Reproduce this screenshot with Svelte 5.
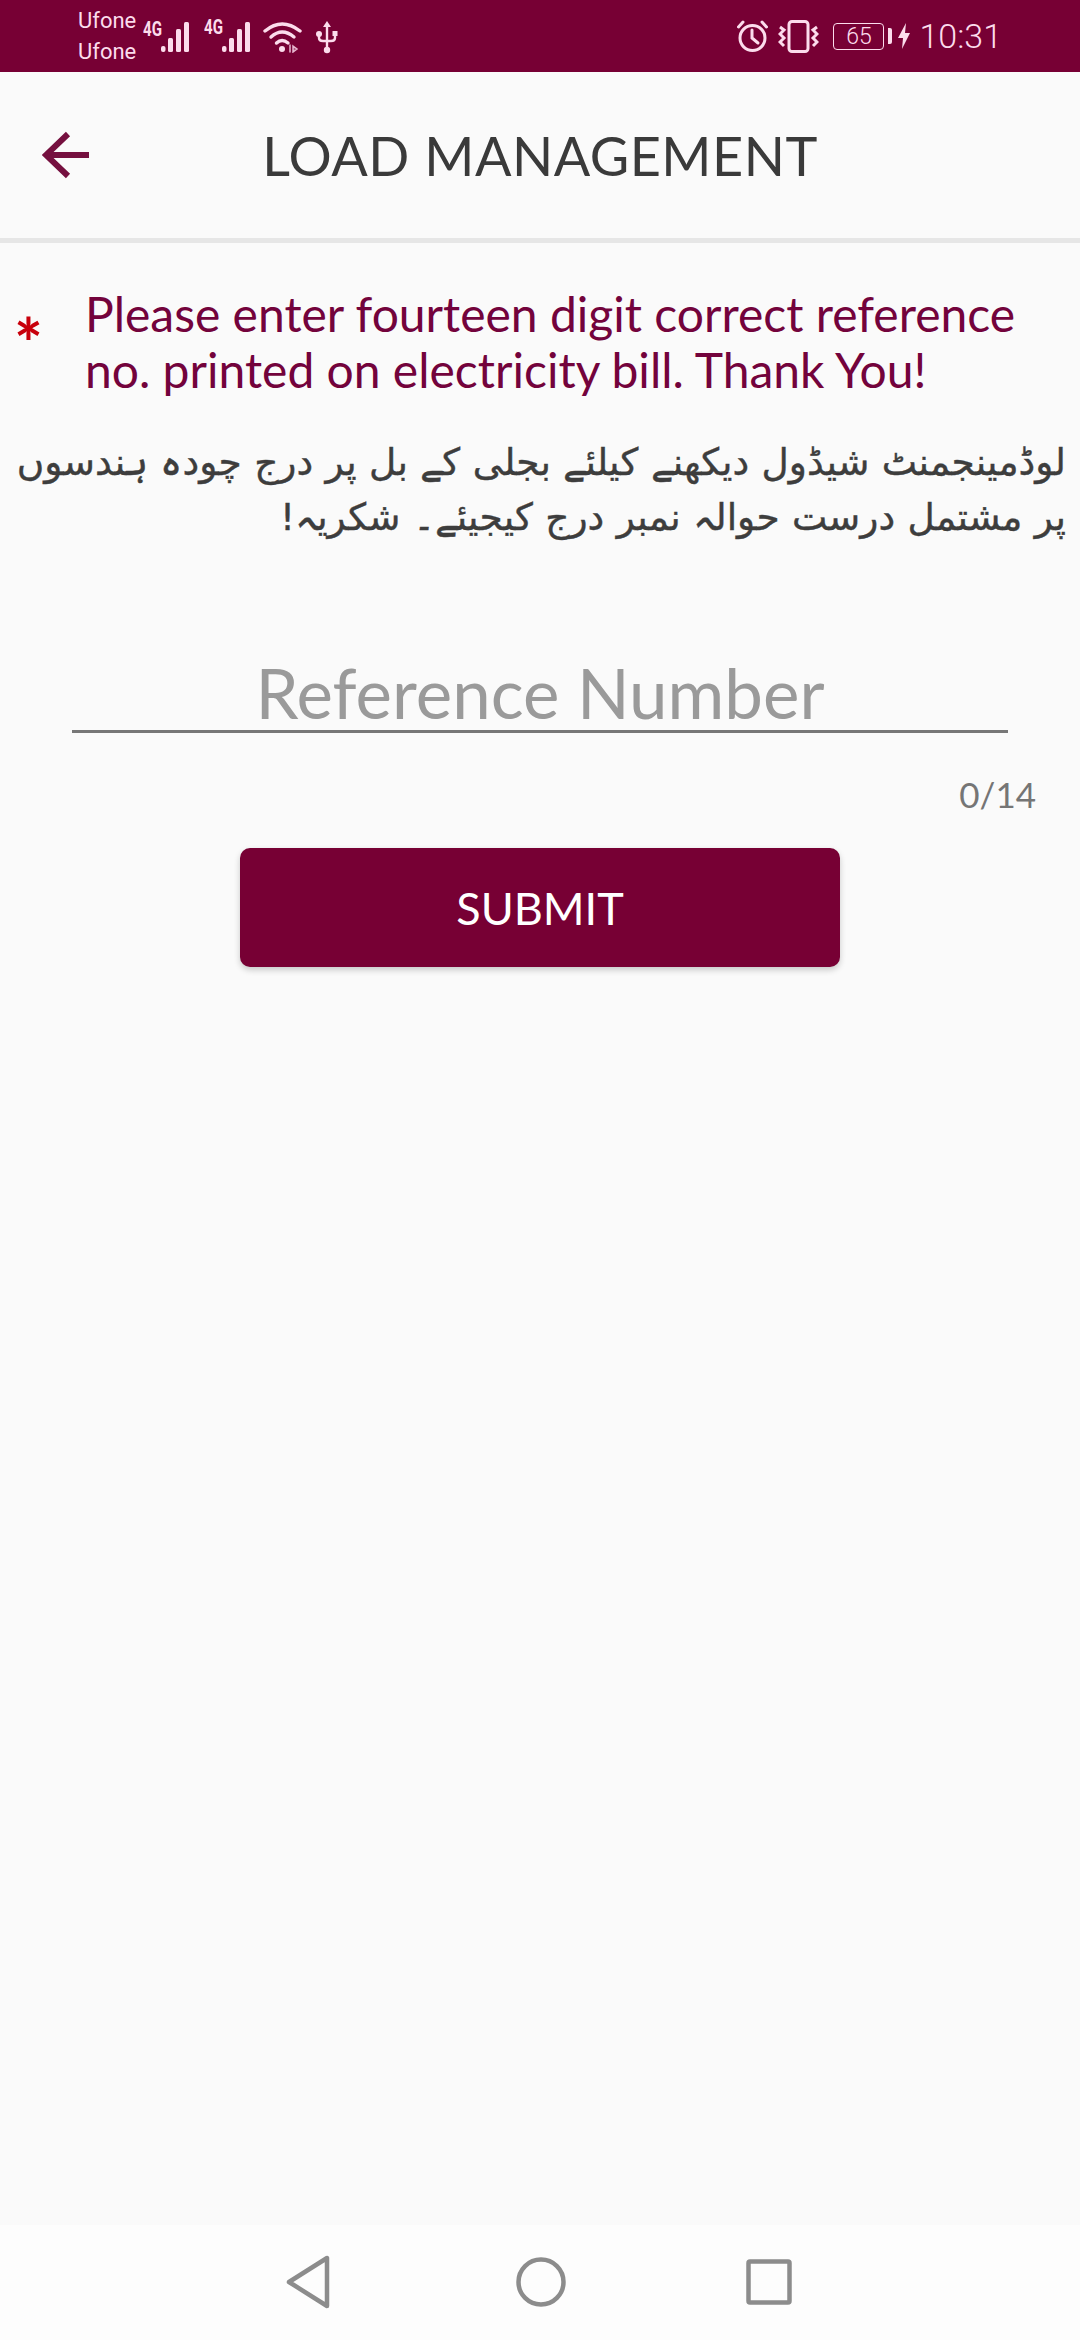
<script lang="ts">
	let reference = $state('');
	const maxDigits = 14;
</script>

<div class="phone">
	<header class="status-bar">
		<div class="status-left">
			<div class="carriers">
				<span>Ufone</span>
				<span>Ufone</span>
			</div>
			<div class="sig">
				<span class="net">4G</span>
				<svg width="32" height="32" viewBox="18 0 32 32">
					<rect x="18" y="26" width="4.500" height="6" rx="2" />
					<rect x="25" y="18" width="5" height="14" rx="1.500" />
					<rect x="33" y="9" width="5" height="23" rx="1.500" />
					<rect x="41" y="2" width="5" height="30" rx="1.500" />
				</svg>
			</div>
			<div class="sig second">
				<span class="net">4G</span>
				<svg width="32" height="32" viewBox="18 0 32 32">
					<rect x="18" y="26" width="4.500" height="6" rx="2" />
					<rect x="25" y="18" width="5" height="14" rx="1.500" />
					<rect x="33" y="9" width="5" height="23" rx="1.500" />
					<rect x="41" y="2" width="5" height="30" rx="1.500" />
				</svg>
			</div>
			<svg class="wifi" width="40" height="32" viewBox="0 0 40 32" fill="none" stroke="#fcdcec" stroke-width="3.400" stroke-linecap="round">
				<path d="M2 10 Q19 -4 37 10" />
				<path d="M8 16 Q19 6 31 16" />
				<path d="M13.500 22 Q19 17 25 22" />
				<circle cx="19" cy="28" r="3" fill="#fcdcec" stroke="none" />
				<path d="M27 24 L27 31 M30 25 L34 28 L30 31 Z" fill="#a8547c" stroke="#e8b8d0" stroke-width="1.500" />
			</svg>
			<svg class="usb" width="22" height="33" viewBox="0 0 22 33" fill="none" stroke="#fcdcec" stroke-width="2.400">
				<path d="M11 5 V28" />
				<path d="M11 0 L15 6 H7 Z" fill="#fcdcec" stroke="none" />
				<circle cx="11" cy="29" r="3.200" fill="#fcdcec" stroke="none" />
				<path d="M3 14 V17 Q3 20 7 20 H15 Q19 20 19 17 V13" />
				<circle cx="3" cy="13" r="3" fill="#fcdcec" stroke="none" />
				<rect x="16.500" y="10" width="5" height="5" fill="#fcdcec" stroke="none" />
			</svg>
		</div>
		<div class="status-right">
			<svg width="31" height="32" viewBox="0 0 31 32" fill="none" stroke="#fcdcec" stroke-width="3" stroke-linecap="round">
				<circle cx="15.500" cy="18" r="12.500" />
				<path d="M15 10 V18 L21 23" />
				<path d="M1.500 7 L6 2" />
				<path d="M29.500 7 L25 2" />
			</svg>
			<svg class="vibrate" width="41" height="33" viewBox="0 0 41 33" fill="none" stroke="#fcdcec" stroke-width="3">
				<rect x="11" y="1.500" width="19" height="30" rx="3" />
				<path d="M2 7 L6 10 L2 14 L6 18 L2 22 L6 26" />
				<path d="M39 7 L35 10 L39 14 L35 18 L39 22 L35 26" />
			</svg>
			<div class="battery">
				<span class="level">65</span>
				<i class="nub"></i>
			</div>
			<svg class="bolt" width="12" height="26" viewBox="0 0 12 26">
				<path d="M8 0 L0 15 H5 L4 26 L12 10 H7 Z" fill="#fcdcec" />
			</svg>
			<span class="time">10:31</span>
		</div>
	</header>

	<nav class="toolbar">
		<button type="button" class="back" aria-label="Back">
			<svg width="48" height="48" viewBox="0 0 48 48" fill="none" stroke="#75103f" stroke-width="6">
				<path d="M47 24 H4" />
				<path d="M26 3 L4 24 L26 45" />
			</svg>
		</button>
		<h1>LOAD MANAGEMENT</h1>
	</nav>

	<main class="content">
		<div class="notice">
			<span class="star">*</span>
			<p>Please enter fourteen digit correct reference no. printed on electricity bill. Thank You!</p>
		</div>
		<p class="urdu" dir="rtl" lang="ur">لوڈمینجمنٹ شیڈول دیکھنے کیلئے بجلی کے بل پر درج چودہ ہندسوں پر مشتمل درست حوالہ نمبر درج کیجیئے۔ شکریہ!</p>

		<div class="field">
			<input type="text" placeholder="Reference Number" maxlength={maxDigits} bind:value={reference} />
		</div>
		<div class="counter">{reference.length}/{maxDigits}</div>
		<button type="button" class="submit">SUBMIT</button>
	</main>

	<footer class="nav-bar">
		<svg width="46" height="54" viewBox="0 0 46 54" fill="none" stroke="#8c8c8c" stroke-width="4.500" stroke-linejoin="round">
			<path d="M41 3 V51 L3 27 Z" />
		</svg>
		<svg width="50" height="52" viewBox="0 0 50 52" fill="none" stroke="#8c8c8c" stroke-width="4.500">
			<circle cx="25" cy="26" r="22.500" />
		</svg>
		<svg class="recents" width="46" height="46" viewBox="0 0 46 46" fill="none" stroke="#8c8c8c" stroke-width="4.500" stroke-linejoin="round">
			<rect x="2.500" y="2.500" width="41" height="41" rx="1.500" />
		</svg>
	</footer>
</div>

<style>
	:global(body) {
		margin: 0;
		background: #fafafa;
	}

	.phone {
		width: 1080px;
		height: 2340px;
		display: flex;
		flex-direction: column;
		background: #fafafa;
		font-family: "Lato", "Open Sans", sans-serif;
		overflow: hidden;
	}

	.status-bar {
		height: 72px;
		flex: none;
		display: flex;
		justify-content: space-between;
		align-items: center;
		padding: 0 78px 0 78px;
		background: #770034;
		color: #fcdcec;
		font-family: "Roboto", sans-serif;
	}

	.status-left,
	.status-right {
		display: flex;
		align-items: center;
	}

	.carriers {
		display: flex;
		flex-direction: column;
		font-size: 22px;
		line-height: 31px;
		width: 65px;
	}

	.sig {
		display: flex;
		align-items: flex-start;
		height: 34px;
		margin-right: 11px;
		margin-top: 2px;
		fill: #fcdcec;
	}

	.sig.second {
		margin-right: 9px;
	}

	.net {
		width: 18px;
		font-size: 21px;
		font-weight: 700;
		line-height: 18px;
		transform: scaleX(0.72);
		transform-origin: left center;
	}

	.sig.second .net {
		margin-top: -2px;
	}

	.wifi {
		margin-right: 13px;
		margin-top: 2px;
	}

	.usb {
		margin-top: 2px;
	}

	.vibrate {
		margin: 0 14px 0 10px;
	}

	.battery {
		position: relative;
		width: 51px;
		height: 27px;
		box-sizing: border-box;
		border: 1.500px solid #fcdcec;
		border-radius: 4px;
		margin-right: 14px;
		display: flex;
		align-items: center;
		justify-content: center;
	}

	.level {
		font-size: 23px;
		font-weight: 300;
	}

	.nub {
		position: absolute;
		right: -9px;
		top: 4px;
		width: 4px;
		height: 16px;
		background: #fcdcec;
		border-radius: 0 2px 2px 0;
	}

	.bolt {
		margin-right: 9px;
	}

	.time {
		font-size: 34px;
		font-weight: 300;
		line-height: 40px;
	}

	.toolbar {
		height: 166px;
		flex: none;
		border-bottom: 5px solid #e6e6e6;
		display: grid;
		grid-template-columns: 1fr auto 1fr;
		align-items: center;
	}

	.back {
		justify-self: start;
		margin-left: 42px;
		padding: 0;
		border: 0;
		background: none;
		display: flex;
	}

	.toolbar h1 {
		margin: 0;
		font-size: 54px;
		font-weight: 400;
		color: #3a3a3a;
		letter-spacing: 0.5px;
	}

	.content {
		flex: 1;
		display: flex;
		flex-direction: column;
	}

	.notice {
		display: flex;
		align-items: flex-start;
		padding: 43px 40px 0 14px;
	}

	.star {
		width: 71px;
		flex: none;
		color: #c8000c;
		font-size: 68px;
		font-weight: 700;
		line-height: 56px;
		margin-top: 29px;
	}

	.notice p {
		margin: 0;
		font-size: 48px;
		line-height: 56px;
		color: #73033c;
	}

	.urdu {
		margin: 37px 14px 0 10px;
		font-family: "DejaVu Sans", sans-serif;
		font-size: 37.500px;
		word-spacing: 0.5px;
		line-height: 55px;
		color: #3d3d3d;
		text-align: right;
		-webkit-text-stroke: 0.4px #3d3d3d;
	}

	.field {
		margin: 110px 72px 0;
		border-bottom: 3px solid #777;
	}

	.field input {
		display: block;
		width: 100%;
		box-sizing: border-box;
		height: 75px;
		padding: 0;
		border: 0;
		outline: 0;
		background: none;
		text-align: center;
		font-family: "Lato", sans-serif;
		font-size: 69px;
		color: #333;
	}

	.field input::placeholder {
		color: #9a9a9a;
		opacity: 1;
	}

	.counter {
		align-self: flex-end;
		margin: 39px 44px 0 0;
		font-size: 35px;
		line-height: 44px;
		color: #757575;
	}

	.submit {
		align-self: center;
		width: 600px;
		height: 119px;
		margin-top: 32px;
		border: 0;
		border-radius: 10px;
		background: #770034;
		color: #fff;
		font-family: "Lato", sans-serif;
		font-size: 45px;
		box-shadow: 0 3px 6px rgba(0, 0, 0, 0.2);
	}

	.nav-bar {
		height: 115px;
		flex: none;
		background: #fdfdfd;
		display: flex;
		align-items: center;
		box-sizing: border-box;
		padding: 0 0 2px 286px;
		gap: 184px;
	}

	.recents {
		margin-left: -4px;
	}
</style>
